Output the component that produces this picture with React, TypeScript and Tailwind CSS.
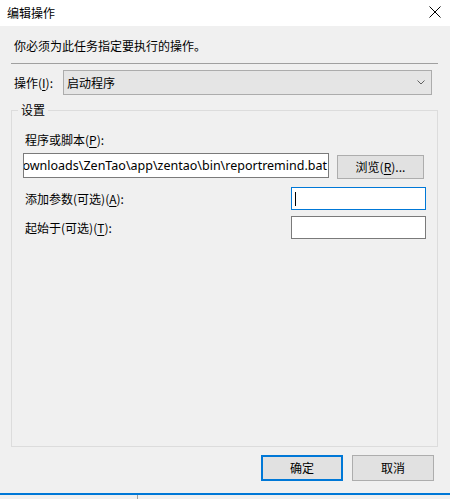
import React from 'react';

const font = { fontFamily: '"Noto Sans CJK SC", "Noto Sans", sans-serif' };

const Label: React.FC<{ text: string; hot: string; after?: string }> = ({ text, hot, after = '):' }) => (
  <span className="text-[12px] leading-[14px] text-black whitespace-nowrap">
    {text}(<span className="underline underline-offset-2">{hot}</span>{after}
  </span>
);

export default function App() {
  return (
    <div className="w-[450px] h-[499px] flex flex-col bg-[#f0f0f0] overflow-hidden" style={font}>
      {/* Title bar */}
      <div className="h-[26px] bg-white flex items-center justify-between pl-[7px] pr-[9px] shrink-0">
        <span className="text-[12px] leading-[14px] text-black">编辑操作</span>
        <svg width="12" height="12" viewBox="0 0 12 12" className="mb-[2px]">
          <path d="M0.5 0.5 L11.5 11.5 M11.5 0.5 L0.5 11.5" stroke="#000" strokeWidth="1" fill="none" />
        </svg>
      </div>

      {/* Body */}
      <div className="flex-1 flex flex-col px-[11px] pr-[12px]">
        <div className="mt-[13px] pl-[3px] text-[12px] leading-[14px] text-black">你必须为此任务指定要执行的操作。</div>
        <div className="mt-[10px] h-px bg-[#a0a0a0] w-[427px]" />

        <div className="mt-[6px] flex items-center">
          <div className="w-[52px] pl-[3px] text-[12px] leading-[14px]">
            <span className="text-black whitespace-nowrap">
              操作(<span className="underline underline-offset-2">I</span>):
            </span>
          </div>
          <div className="w-[369px] h-[25px] bg-[#e5e5e5] border border-[#acacac] flex items-center justify-between pl-[3px] pr-[6px]">
            <span className="text-[12px] leading-[14px] text-black">启动程序</span>
            <svg width="8" height="5" viewBox="0 0 8 5">
              <path d="M0.5 0.5 L4 4 L7.5 0.5" stroke="#606060" strokeWidth="1" fill="none" />
            </svg>
          </div>
        </div>

        {/* Group box */}
        <fieldset className="mt-[8px] w-[427px] h-[344px] border border-[#dcdcdc] flex flex-col">
          <legend className="ml-[6px] px-[3px] text-[12px] leading-[14px] text-black">设置</legend>
          <div className="mt-[16px] pl-[13px] text-[12px] leading-[14px]">
            <Label text="程序或脚本" hot="P" />
          </div>

          <div className="mt-[6px] flex items-start pl-[11px]">
            <div className="w-[306px] h-[25px] bg-white border border-[#7a7a7a] flex items-center justify-end overflow-hidden pr-[1px]">
              <span className="text-[12.5px] leading-[16px] text-black whitespace-nowrap" style={{ fontFamily: '"Noto Sans", sans-serif' }}>
                C:\Users\Administrator\Downloads\ZenTao\app\zentao\bin\reportremind.bat
              </span>
            </div>
            <button className="ml-[8px] mt-[2px] w-[87px] h-[24px] bg-[#e1e1e1] border border-[#adadad] flex items-center justify-center">
              <span className="text-[12px] leading-[14px] text-black whitespace-nowrap">
                浏览(<span className="underline underline-offset-2">R</span>)...
              </span>
            </button>
          </div>

          <div className="mt-[8px] flex items-center justify-between pl-[13px] pr-[11px]">
            <Label text="添加参数(可选)" hot="A" />
            <div className="w-[135px] h-[23px] bg-white border border-[#0078d7] flex items-center pl-[3px]">
              <div className="w-px h-[14px] bg-black" />
            </div>
          </div>

          <div className="mt-[6px] flex items-center justify-between pl-[13px] pr-[11px]">
            <Label text="起始于(可选)" hot="T" />
            <div className="w-[135px] h-[23px] bg-white border border-[#7a7a7a]" />
          </div>
        </fieldset>

        {/* Buttons */}
        <div className="mt-[8px] flex justify-end gap-[9px] pr-[4px]">
          <button className="w-[82px] h-[26px] bg-[#e1e1e1] border-2 border-[#0078d7] flex items-center justify-center">
            <span className="text-[12px] leading-[14px] text-black">确定</span>
          </button>
          <button className="w-[82px] h-[26px] bg-[#e1e1e1] border border-[#adadad] flex items-center justify-center">
            <span className="text-[12px] leading-[14px] text-black">取消</span>
          </button>
        </div>
      </div>

      {/* Bottom edge of window behind */}
      <div className="h-[6px] shrink-0 border-t-2 border-[#0078d7] flex">
        <div className="w-[137px]" />
        <div className="w-px bg-[#a0a0a0]" />
      </div>
    </div>
  );
}
